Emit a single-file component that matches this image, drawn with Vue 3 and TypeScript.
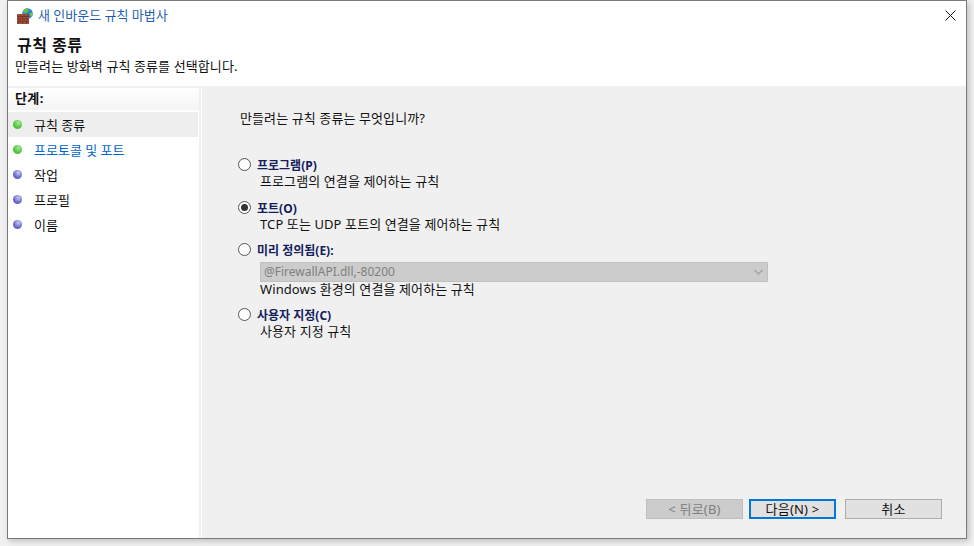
<script setup lang="ts">
interface Step { label: string; done: boolean; link?: boolean; active?: boolean }
interface Option { id: string; label: string; desc: string; checked?: boolean; combo?: boolean }
const steps: Step[] = [
  { label: '규칙 종류', done: true, active: true },
  { label: '프로토콜 및 포트', done: true, link: true },
  { label: '작업', done: false },
  { label: '프로필', done: false },
  { label: '이름', done: false },
]
const options: Option[] = [
  { id: 'program', label: '프로그램(P)', desc: '프로그램의 연결을 제어하는 규칙' },
  { id: 'port', label: '포트(O)', desc: 'TCP 또는 UDP 포트의 연결을 제어하는 규칙', checked: true },
  { id: 'predef', label: '미리 정의됨(E):', desc: 'Windows 환경의 연결을 제어하는 규칙', combo: true },
  { id: 'custom', label: '사용자 지정(C)', desc: '사용자 지정 규칙' },
]
</script>

<template>
  <div class="page">
    <div class="window">
      <div class="titlebar">
        <svg class="appicon" width="16" height="16" viewBox="0 0 16 16">
          <circle cx="10.5" cy="5.5" r="5.300" fill="#2f7fd0" />
          <path d="M7 1.500c2-1.300 4-1 5-.2l-1 2.700-3 1.500-2-1z" fill="#5fbf4a" />
          <path d="M12.500 5l3-.5.300 2.500-2 2z" fill="#6cc850" />
          <rect x="0" y="6" width="12" height="10" fill="#a5523c" />
          <path d="M0 8.500h12M0 11h12M0 13.500h12M3 6v2.500M7 6v2.500M11 6v2.500M1.500 8.500V11M5.500 8.500V11M9.500 8.500V11M3 11v2.500M7 11v2.500M11 11v2.500M1.500 13.500V16M5.500 13.500V16M9.500 13.500V16" stroke="#74382a" stroke-width="1" fill="none" />
        </svg>
        <span class="title">새 인바운드 규칙 마법사</span>
        <svg class="close" width="11" height="11" viewBox="0 0 11 11">
          <path d="M.5.5l10 10M10.500.5l-10 10" stroke="#111" stroke-width="1" fill="none" />
        </svg>
      </div>
      <div class="header">
        <div class="h-title">규칙 종류</div>
        <div class="h-sub">만들려는 방화벽 규칙 종류를 선택합니다.</div>
      </div>
      <div class="body">
        <aside class="steps">
          <div class="steps-head">단계:</div>
          <ul class="step-list">
            <li v-for="s in steps" :key="s.label" class="step" :class="{ active: s.active, link: s.link }">
              <span class="dot" :class="s.done ? 'green' : 'blue'"></span>
              <span>{{ s.label }}</span>
            </li>
          </ul>
        </aside>
        <main class="main">
          <p class="question">만들려는 규칙 종류는 무엇입니까?</p>
          <div class="options">
            <div v-for="o in options" :key="o.id" class="option" :class="o.id">
              <div class="opt-row">
                <span class="radio" :class="{ on: o.checked }"></span>
                <span class="opt-label">{{ o.label }}</span>
              </div>
              <div v-if="o.combo" class="combo">
                <span>@FirewallAPI.dll,-80200</span>
                <svg width="9" height="6" viewBox="0 0 9 6"><path d="M.5 1l4 4 4-4" stroke="#a0a0a0" stroke-width="1.200" fill="none" /></svg>
              </div>
              <div class="opt-desc">{{ o.desc }}</div>
            </div>
          </div>
          <div class="buttons">
            <button class="btn back" disabled>&lt; 뒤로(B)</button>
            <button class="btn next">다음(N) &gt;</button>
            <button class="btn cancel">취소</button>
          </div>
        </main>
      </div>
    </div>
  </div>
</template>

<style>
html, body { margin: 0; background: #f0f0f0; overflow: hidden; }
</style>

<style scoped>
.page {
  width: 974px;
  height: 546px;
  padding-left: 7px;
  box-sizing: border-box;
  background: #f1f1f1;
  font-family: "Noto Sans", "Noto Sans CJK KR", sans-serif;
  font-size: 13px;
  color: #111;
}
.window {
  width: 960px;
  height: 539px;
  box-sizing: border-box;
  border: 1px solid #7a7a7a;
  background: #fff;
  display: flex;
  flex-direction: column;
  box-shadow: 2px 2px 6px rgba(0, 0, 0, 0.22);
}
.titlebar {
  height: 29px;
  flex: none;
  display: flex;
  align-items: center;
  padding: 0 10px 0 9px;
}
.appicon { margin-right: 5px; }
.title { color: #1f5fb0; line-height: 28px; margin-top: -2px; }
.close { margin-left: auto; }
.header { height: 56px; flex: none; padding-left: 9px; box-sizing: border-box; }
.h-title { font-size: 16px; font-weight: 700; line-height: 20px; margin-top: 5px; letter-spacing: 0.5px; }
.h-sub { line-height: 20px; margin-top: 1px; margin-left: -2px; letter-spacing: 0.1px; }
.body {
  flex: 1;
  display: flex;
  border-top: 2px solid #f0f0f0;
  min-height: 0;
}
.steps {
  width: 191px;
  flex: none;
  border-right: 2px solid #f0f0f0;
  background: #fff;
}
.steps-head {
  height: 22px;
  line-height: 20px;
  padding-left: 7px;
  font-weight: 700;
  letter-spacing: 0.4px;
  background: linear-gradient(#fff, #f4f4f4);
}
.step-list { list-style: none; margin: 0; padding: 2px 0 0; }
.step {
  height: 25px;
  display: flex;
  align-items: center;
  padding-left: 5px;
  width: 190px;
  box-sizing: border-box;
}
.step.active { background: #eeeeee; }
.step.link { color: #0066cc; }
.dot {
  width: 9px;
  height: 9px;
  border-radius: 50%;
  margin-right: 12px;
  flex: none;
}
.dot.green { background: radial-gradient(circle at 60% 30%, #a9e89a, #4dc23a 60%); }
.dot.blue { background: radial-gradient(circle at 60% 30%, #c9c9f0, #6464c8 60%); }
.main {
  flex: 1;
  background: #f0f0f0;
  margin-left: 1px;
  display: flex;
  flex-direction: column;
  box-sizing: border-box;
  padding: 0 24px 19px 36px;
}
.question { margin: 20px 0 0 2px; line-height: 20px; height: 20px; flex: none; letter-spacing: 0.1px; }
.options { flex: 1; padding-top: 28px; }
.option { padding-bottom: 9px; }
.option.program { padding-bottom: 10px; }
.opt-row { display: flex; align-items: center; height: 17px; }
.radio {
  width: 13px;
  height: 13px;
  box-sizing: border-box;
  border: 1px solid #555;
  border-radius: 50%;
  background: #fff;
  margin-right: 6px;
  flex: none;
  position: relative;
}
.radio.on::after {
  content: "";
  position: absolute;
  left: 2px;
  top: 2px;
  width: 7px;
  height: 7px;
  border-radius: 50%;
  background: #333;
}
.opt-label { font-weight: 700; font-size: 12px; color: #14205c; }
.opt-desc { margin-left: 22px; line-height: 16px; letter-spacing: 0.1px; }
.combo {
  margin: 4px 0 -1px 22px;
  width: 508px;
  height: 20px;
  box-sizing: border-box;
  border: 1px solid #bfbfbf;
  background: #cccccc;
  color: #808080;
  font-size: 12px;
  line-height: 17px;
  display: flex;
  align-items: flex-start;
  justify-content: space-between;
  padding: 0 4px 0 3px;
}
.combo svg { margin-top: 6px; }
.buttons { display: flex; justify-content: flex-end; flex: none; }
.btn {
  height: 20px;
  box-sizing: border-box;
  font: inherit;
  padding: 0;
  color: #111;
  background: #e1e1e1;
  border: 1px solid #adadad;
  line-height: 16px;
  letter-spacing: 0.2px;
}
.back { width: 97px; background: #cccccc; border-color: #bfbfbf; color: #808080; margin-right: 6px; }
.next { width: 87px; border: 2px solid #0078d7; margin-right: 9px; }
.cancel { width: 97px; }
</style>
